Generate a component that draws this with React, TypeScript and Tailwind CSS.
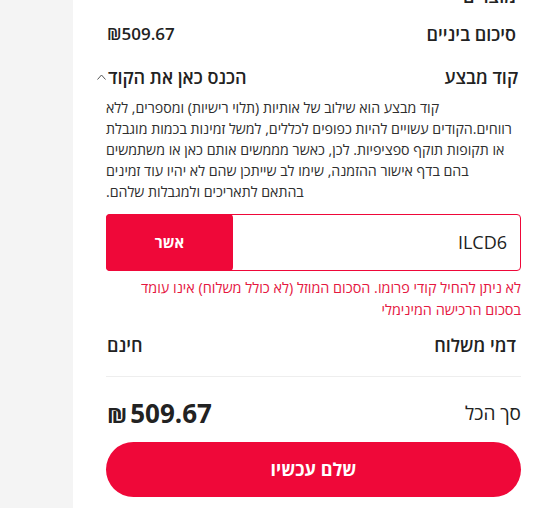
import React, { useState } from 'react'

const RED = 'bg-[#ef0839]'

const ChevronUp = () => (
  <svg width="9" height="6" viewBox="0 0 9 6" fill="none" className="shrink-0">
    <path d="M0.5 5.5 L4.5 1 L8.5 5.5" stroke="#555" strokeWidth="1" />
  </svg>
)

const App = () => {
  const [code, setCode] = useState('ILCD6')

  return (
    <div
      className="flex h-screen w-full overflow-hidden text-[#222]"
      style={{ fontFamily: '"Open Sans", "DejaVu Sans", sans-serif' }}
    >
      {/* Grey side strip */}
      <aside className="w-[73px] shrink-0 bg-[#f4f4f4]" />

      {/* Order summary */}
      <main dir="rtl" className="flex flex-1 flex-col bg-white pl-[33px] pr-5">
        <div className="-mt-[16px] mb-[2px] flex h-6 items-center justify-between text-[18px] leading-6 font-semibold">
          <span className="mr-[5px]">מוצרים</span>
        </div>

        <div className="mt-3 flex h-6 items-center justify-between text-[18px] leading-6 font-semibold">
          <span className="mr-[5px]">סיכום ביניים</span>
          <span dir="ltr" className="ml-px text-[17px]">₪509.67</span>
        </div>

        <div className="mt-[19px] flex h-6 items-center justify-between text-[18px] leading-6 font-semibold">
          <span className="mr-[3px]">קוד מבצע</span>
          <span className="-ml-[9px] flex items-center gap-[2px]">
            <span>הכנס כאן את הקוד</span>
            <ChevronUp />
          </span>
        </div>

        <p className="mt-2 text-end text-[14.2px] leading-[21px] text-[#2e2e2e]">
          קוד מבצע הוא שילוב של אותיות (תלוי רישיות) ומספרים, ללא
          <br />
          רווחים.הקודים עשויים להיות כפופים לכללים, למשל זמינות בכמות מוגבלת
          <br />
          או תקופות תוקף ספציפיות. לכן, כאשר מממשים אותם כאן או משתמשים
          <br />
          בהם בדף אישור ההזמנה, שימו לב שייתכן שהם לא יהיו עוד זמינים
          <br />
          בהתאם לתאריכים ולמגבלות שלהם.
        </p>

        <div className="mt-3 flex h-[57px] rounded-[4px] border border-[#ef0839]">
          <input
            dir="ltr"
            value={code}
            onChange={(e) => setCode(e.target.value)}
            className="min-w-0 flex-1 bg-transparent pr-[13px] text-right text-[18px] text-[#222] outline-none"
          />
          <button className={`-my-px -ml-px w-[127px] shrink-0 rounded-[4px] ${RED} text-[15px] font-bold text-white`}>
            אשר
          </button>
        </div>

        <p className="mt-[6px] text-[14.4px] leading-[22px] text-[#e5173f]">
          לא ניתן להחיל קודי פרומו. הסכום המוזל (לא כולל משלוח) אינו עומד
          <br />
          בסכום הרכישה המינימלי
        </p>

        <div className="mt-3 flex h-6 items-center justify-between text-[18px] leading-6 font-semibold">
          <span className="mr-[5px]">דמי משלוח</span>
          <span className="ml-px">חינם</span>
        </div>

        <div className="mt-[19px] h-px bg-[#eeeeee]" />

        <div className="mt-5 flex h-8 items-center justify-between">
          <span className="text-[19px] font-medium">סך הכל</span>
          <span dir="ltr" className="ml-px flex items-baseline gap-[3px] font-bold">
            <span className="text-[22px]">₪</span>
            <span className="text-[26px]">509.67</span>
          </span>
        </div>

        <button className={`mt-[13px] h-[55px] w-full rounded-full ${RED} text-[18px] font-bold text-white`}>
          שלם עכשיו
        </button>
      </main>
    </div>
  )
}

export default App
